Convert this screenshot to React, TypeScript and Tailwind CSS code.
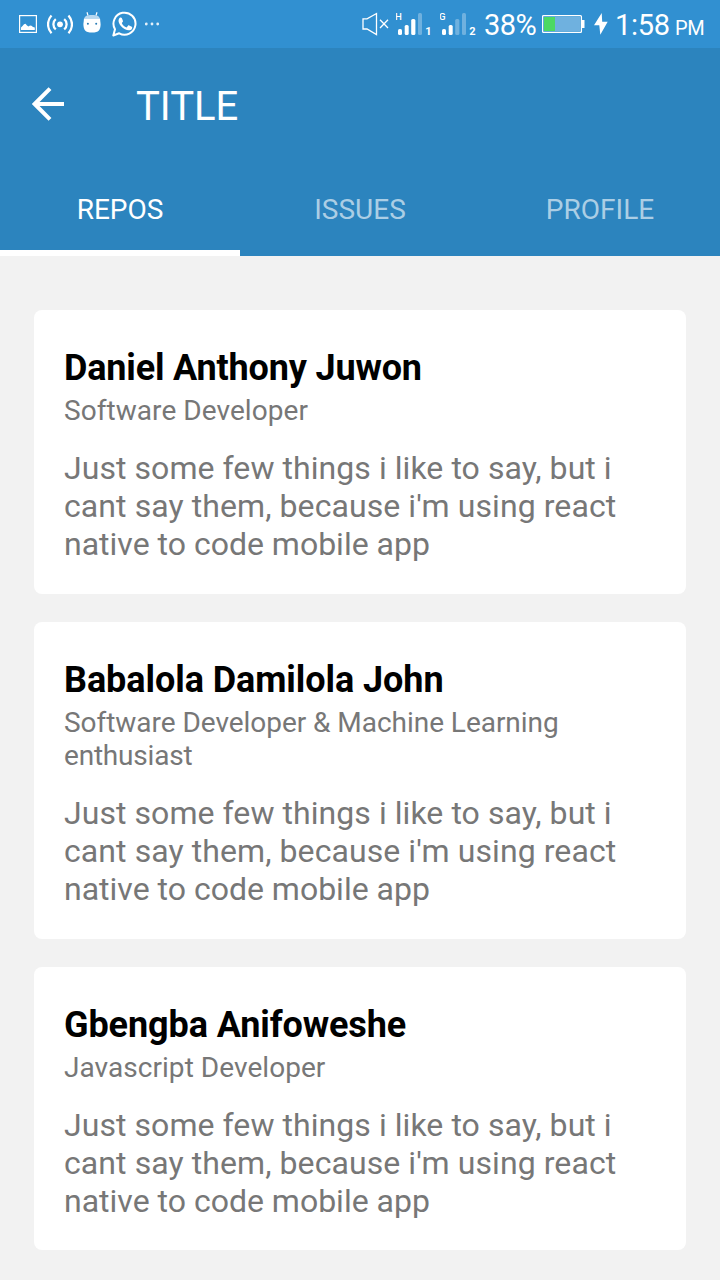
import React from "react";

const TABS = ["REPOS", "ISSUES", "PROFILE"];

const ABOUT = [
  { text: "Just some few things i like to say, but i", tracking: "tracking-[0.06px]" },
  { text: "cant say them, because i'm using react", tracking: "tracking-[0.08px]" },
  { text: "native to code mobile app", tracking: "tracking-normal" },
];

const PEOPLE = [
  {
    name: "Daniel Anthony Juwon",
    tracking: "tracking-[-0.17px]",
    role: [{ text: "Software Developer", tracking: "tracking-[0.06px]" }],
    size: "h-[284px]",
  },
  {
    name: "Babalola Damilola John",
    tracking: "tracking-[-0.07px]",
    role: [
      { text: "Software Developer & Machine Learning", tracking: "tracking-[-0.04px]" },
      { text: "enthusiast", tracking: "tracking-[-0.2px]" },
    ],
    size: "h-[317px]",
  },
  {
    name: "Gbengba Anifoweshe",
    tracking: "tracking-[-0.1px]",
    role: [{ text: "Javascript Developer", tracking: "tracking-[0.05px]" }],
    size: "h-[283px]",
  },
];

function Signal({ label, slot, strong }: { label: string; slot: string; strong: number }) {
  return (
    <svg width="37" height="48" viewBox="0 0 37 48" fill="#fff" className="shrink-0">
      <text x="-0.9" y="20" fontSize="9.6" fontWeight="500" fontFamily="Roboto, sans-serif">{label}</text>
      <rect x="2" y="29" width="4" height="6" rx="1.5" />
      <rect x="8.7" y="25" width="4" height="10" rx="1.5" />
      <rect x="15.2" y="19" width="4.2" height="16" rx="1.5" opacity={strong > 2 ? 1 : 0.3} />
      <rect x="22" y="13" width="4" height="22" rx="1.5" opacity="0.3" />
      <text x="29.3" y="35" fontSize="11" fontWeight="700" fontFamily="Roboto, sans-serif">{slot}</text>
    </svg>
  );
}

function StatusBar() {
  return (
    <div className="flex h-12 items-center bg-[#3190d1] pl-[19px] text-white">
      <svg width="18" height="48" viewBox="0 0 18 48" fill="none" className="shrink-0">
        <rect x="0.6" y="15.6" width="16.8" height="16.8" stroke="#fff" strokeWidth="1.2" />
        <path d="M2 30V27.5L3.5 26L5 24.2L6.5 23.8L8 25.5L9.5 26.5L11 25.5L12.5 25.7L14 27L15.8 27.5V30Z" fill="#fff" />
      </svg>
      <svg width="26" height="48" viewBox="0 0 26 48" fill="none" stroke="#fff" strokeWidth="2.3" className="ml-[10px] shrink-0">
        <circle cx="13" cy="24.3" r="2.9" fill="#fff" stroke="none" />
        <path d="M8.8 19.2A6.6 6.6 0 0 0 8.8 29.4M17.2 19.2A6.6 6.6 0 0 1 17.2 29.4M4.5 15.4C-.1 20.5-.1 28.2 4.5 33.2M21.5 15.4C26.1 20.5 26.1 28.2 21.5 33.2" />
      </svg>
      <svg width="18" height="48" viewBox="0 0 18 48" fill="none" className="ml-[10px] shrink-0">
        <path d="M5 15.5L4 12.3M13 15.5L14 12.3" stroke="#fff" strokeWidth="1.2" />
        <path d="M1.3 18.6C2 15.7 4 15 9 15s7 .7 7.7 3.6z" fill="#b7d8f0" />
        <path d="M1 18.5H17L17.6 24C17.5 30 16 32.5 9 32.5S.5 30 .4 24Z" fill="#fff" />
        <circle cx="4.9" cy="23.8" r="1" fill="#287bb5" />
        <circle cx="13.2" cy="23.8" r="1" fill="#287bb5" />
      </svg>
      <svg width="26" height="48" viewBox="0 0 26 48" fill="none" className="ml-[11px] shrink-0">
        <path d="M3 29.2A11 11 0 1 1 7.2 33.3L1.3 35.5Z" stroke="#fff" strokeWidth="2" strokeLinejoin="round" />
        <path d="M7.8 17.7c.8-.5 1.6-.4 2 .4l1.1 2.6c.3.8-.1 1.2-1.1 2.2.7 2.1 2.6 3.8 4.8 4.5l1.4-1.7c.4-.4.8-.4 1.2-.2l2.6 1.3c.7.4.5 1.4 0 2.1-1.5 2-4.3 1.7-6.8.4-3.3-1.7-6-5.1-6.4-7.8-.2-1.5.2-2.9 1.2-3.8Z" fill="#fff" />
      </svg>
      <svg width="15" height="48" viewBox="0 0 15 48" fill="#e3f0fa" className="ml-[7px] shrink-0">
        <circle cx="1.3" cy="24" r="1.4" /><circle cx="7" cy="24" r="1.4" /><circle cx="12.7" cy="24" r="1.4" />
      </svg>

      <svg width="28" height="48" viewBox="0 0 28 48" fill="none" stroke="#fff" strokeWidth="1.3" className="ml-[202px] shrink-0">
        <path d="M1 18.8H5L14.5 13.5V34.5L5 29H1ZM18 19.8L26 28M26 19.8L18 28" />
      </svg>
      <div className="ml-[6px] flex gap-[7px]">
        <Signal label="H" slot="1" strong={3} />
        <Signal label="G" slot="2" strong={2} />
      </div>
      <span className="ml-[7px] w-[58px] shrink-0 whitespace-nowrap pt-[3px] text-[29px] leading-none tracking-[-0.5px]">38%</span>
      <svg width="43" height="48" viewBox="0 0 43 48" className="shrink-0">
        <rect x="0.6" y="15.6" width="38.8" height="16.8" rx="1" fill="none" stroke="#fff" strokeWidth="1.3" />
        <rect x="2" y="17" width="36" height="14" fill="#6fb1df" />
        <rect x="2" y="17" width="11" height="14" fill="#4cd964" />
        <path d="M39.5 20H42.5V28H39.5Z" fill="#fff" />
      </svg>
      <svg width="14" height="48" viewBox="0 0 14 48" fill="#fff" className="ml-[9px] shrink-0">
        <path d="M7.7 13L0 25.3H5.3L6.3 34.8L13.7 21.8H8.2Z" />
      </svg>
      <span className="ml-[7px] w-[60px] shrink-0 whitespace-nowrap pt-[3px] text-[29px] leading-none tracking-[-0.3px]">1:58</span>
      <span className="shrink-0 whitespace-nowrap pt-[8px] text-[20px] leading-none tracking-[-0.4px]">PM</span>
    </div>
  );
}

export default function App() {
  return (
    <div className="flex h-[1280px] w-[720px] flex-col overflow-hidden bg-[#f2f2f2] font-['Roboto',sans-serif]">
      <StatusBar />
      <header className="h-[208px] bg-[#2c84be] text-white">
        <div className="flex h-28 items-center pl-8">
          <svg width="32" height="34" viewBox="0 0 32 34" fill="none" stroke="#fff" strokeWidth="4">
            <path d="M18 1.7L2.7 17L18 32.3M3 17H32" />
          </svg>
          <h1 className="ml-[72px] pt-1.5 text-[40px] leading-none">TITLE</h1>
        </div>
        <nav className="grid h-24 grid-cols-3">
          {TABS.map((tab, i) => (
            <button
              key={tab}
              className={
                i === 0
                  ? "border-b-6 border-white pt-[9px] text-[28px] leading-none"
                  : "border-b-6 border-transparent pt-[9px] text-[28px] leading-none text-[#abcee5]"
              }
            >
              {tab}
            </button>
          ))}
        </nav>
      </header>
      <main className="flex flex-col gap-7 px-[34px] pt-[54px]">
        {PEOPLE.map((p) => (
          <article key={p.name} className={`shrink-0 rounded-lg bg-white px-[30px] pt-[37px] ${p.size}`}>
            <h2 className={`whitespace-nowrap text-[36px] leading-[43px] font-bold text-black ${p.tracking}`}>{p.name}</h2>
            <div className="mt-1 text-[28px] leading-[33px] text-[#777]">
              {p.role.map((line) => (
                <p key={line.text} className={`whitespace-nowrap ${line.tracking}`}>{line.text}</p>
              ))}
            </div>
            <div className="mt-[22px] text-[32px] leading-[38px] text-[#777]">
              {ABOUT.map((line) => (
                <p key={line.text} className={`whitespace-nowrap ${line.tracking}`}>{line.text}</p>
              ))}
            </div>
          </article>
        ))}
      </main>
    </div>
  );
}
